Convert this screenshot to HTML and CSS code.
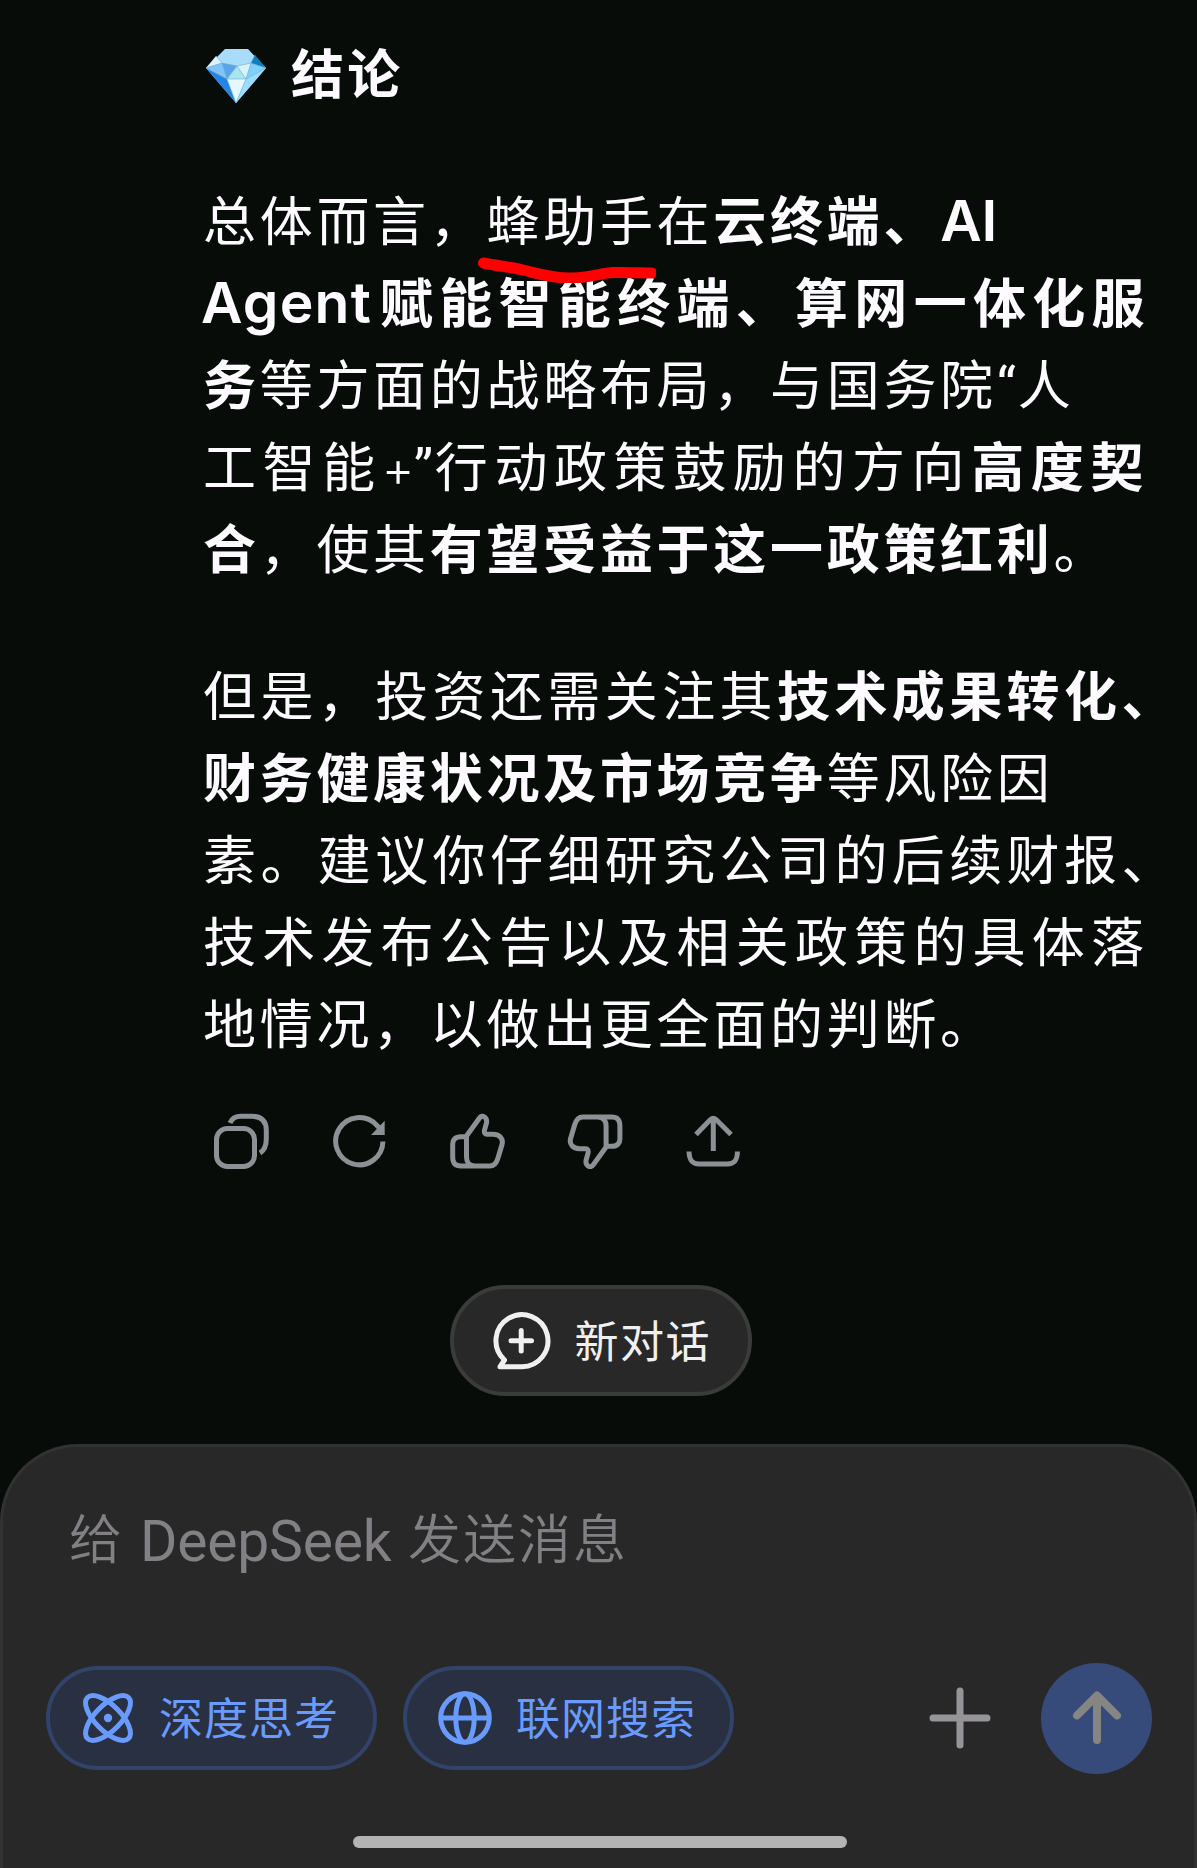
FILE: index.html
```html
<!DOCTYPE html>
<html lang="zh-CN">
<head>
  <meta charset="UTF-8">
  <meta name="viewport" content="width=device-width, initial-scale=1.0">
  <title>DeepSeek</title>
  <link rel="stylesheet" href="styles.css">
</head>
<body>
  <main class="answer">
    <h2 class="heading">
      <svg class="gem" viewBox="0 0 62 56">
        <path fill="#a9dcfb" d="M20 1h23l18 19-30 35L1 20z"/>
        <path fill="#d9f4ff" d="M11 8l6 7-16 5z"/>
        <path fill="#7fc4f5" d="M1 20l16-5 5 16z"/>
        <path fill="#5aa5ea" d="M17 15l15 3-10 13z"/>
        <path fill="#a6e6ee" d="M32 18l9 13H22z"/>
        <path fill="#d7f2fc" d="M32 18l14-3-5 16z"/>
        <path fill="#7fd0fa" d="M46 15l15 5-20 11z"/>
        <path fill="#0c7fc0" d="M50 7l11 13-15-5z"/>
        <path fill="#2386e3" d="M1 20l21 11 9 24z"/>
        <path fill="#e4f8ff" d="M22 31h19L31 55z"/>
        <path fill="#9bdcff" d="M61 20L41 31 31 55z"/>
        <path fill="none" stroke="#6fa7cd" stroke-width=".6" d="M11 8l6 7 15 3 14-3 4-8M1 20l16-5 5 16h19l5-16 15 5M22 31l10-13 9 13M1 20l21 11 9 24 10-24 20-11"/>
      </svg>
      <span>结论</span>
    </h2>

    <p class="text">
      <span class="line l1">总体而言，<span class="marked">蜂助手<svg class="stroke" viewBox="0 0 180 28"><path d="M7.500 8C22 11 34 12 47 15s28 8.500 49 8 29-5 41-5.500 30 .5 38.500.5"/></svg></span>在<b>云终端、<i>AI</i></b></span>
      <span class="line l2"><b><i>Agent</i>赋能智能终端、算网一体化服</b></span>
      <span class="line l3"><b>务</b>等方面的战略布局，与国务院<i class="quote">“</i>人</span>
      <span class="line l4">工智能<i class="plus-sign">+</i><i class="quote">”</i>行动政策鼓励的方向<b>高度契</b></span>
      <span class="line l5"><b>合</b>，使其<b>有望受益于这一政策红利</b>。</span>
    </p>
    <p class="text">
      <span class="line l6">但是，投资还需关注其<b>技术成果转化、</b></span>
      <span class="line l7"><b>财务健康状况及市场竞争</b>等风险因</span>
      <span class="line l8">素。建议你仔细研究公司的后续财报、</span>
      <span class="line l9">技术发布公告以及相关政策的具体落</span>
      <span class="line l10">地情况，以做出更全面的判断。</span>
    </p>

    <div class="actions">
      <svg viewBox="0 0 56 56"><rect x="3.500" y="15.500" width="38" height="38" rx="11"/><path d="M17 10c2-5 6-6.700 11-6.700h11c10 0 14.300 5.500 14.300 13.700v9c0 7-1.300 11-6.300 14"/></svg>
      <svg viewBox="0 0 56 56"><path d="M51.900 28.500A23.600 23.600 0 1 1 45.500 12l3 3"/><path class="solid" d="M53.700 7.700V22H40z"/></svg>
      <svg viewBox="0 0 56 56"><path id="thumb" d="M17.500 23L30.500 5c3-4 8-.5 7 5l-2 7c-.5 3 .5 4.300 2.500 4.300h6c7 0 10.500 4.700 9 10.200L49 45c-1.500 5-4 8-8 8H26c-6 0-8.500-4-8.500-9zM17.500 23.700H12c-6 0-8.300 3.300-8.300 7.300v13c0 6 2.300 9 8.300 9h14"/></svg>
      <svg viewBox="0 0 56 56"><use href="#thumb" transform="rotate(180 28.3 28.5)"/></svg>
      <svg viewBox="0 0 56 56"><path d="M28.300 38V5M11 21.500L25.500 6.500q2.800-2.500 5.600 0L46 21.500M4 38.500c.3 9 3 12.500 10 12.500h28.500c7 0 9.700-3.500 10-12.500"/></svg>
    </div>
  </main>

  <button class="new-chat">
    <svg viewBox="0 0 60 60"><path d="M30 55.700H9l4.500-6.700A26 26 0 1 1 30 55.700zM20 29.700h20.500M30.200 19.500V40"/></svg>
    <span>新对话</span>
  </button>

  <footer class="composer">
    <div class="placeholder">给<span class="brand">DeepSeek</span>发送消息</div>
    <div class="tools">
      <button class="chip">
        <svg viewBox="0 0 56 56"><ellipse cx="28" cy="28" rx="29" ry="12.800" transform="rotate(45 28 28)"/><ellipse cx="28" cy="28" rx="29" ry="12.800" transform="rotate(-45 28 28)"/><circle class="dot" cx="28" cy="28" r="4.200"/></svg>
        <span>深度思考</span>
      </button>
      <button class="chip">
        <svg viewBox="0 0 56 56"><circle cx="28" cy="28" r="24.300"/><ellipse cx="28" cy="28" rx="9.200" ry="24.300"/><path d="M4 28h48"/></svg>
        <span>联网搜索</span>
      </button>
      <svg class="plus" viewBox="0 0 62 62"><path d="M4 31h54M31 4v54"/></svg>
      <button class="send">
        <svg viewBox="0 0 56 56"><path d="M28 50V6M8 25.500L28 5.500l20 20"/></svg>
      </button>
    </div>
    <div class="home-bar"></div>
  </footer>
</body>
</html>
```

FILE: styles.css
```css
* {
  box-sizing: border-box;
}
body {
  margin: 0;
  width: 1197px;
  height: 1868px;
  display: flex;
  flex-direction: column;
  align-items: center;
  background-color: #070c09;
  color: #fdfbff;
  font-family: "Noto Sans CJK SC", sans-serif;
  overflow: hidden;
}
button {
  font-family: inherit;
  margin: 0;
  padding: 0;
}
.answer {
  width: 100%;
  height: 1285px;
  padding: 30px 0 0 203px;
}
.heading {
  display: flex;
  align-items: center;
  height: 82px;
  margin: 0 0 65px;
  font-size: 53px;
  font-weight: 700;
  letter-spacing: 3.3px;
}
.gem {
  width: 62px;
  height: 56px;
  margin: 9px 24px 0 2px;
}
.text {
  margin: 0 0 65px;
  font-size: 53px;
  line-height: 82px;
}
.line {
  display: block;
  height: 82px;
  white-space: nowrap;
  letter-spacing: 3.7px;
}
.line i {
  font-family: Inter, sans-serif;
  font-style: normal;
  font-size: 57px;
  line-height: 1;
  letter-spacing: 0;
}
.line b {
  font-weight: 700;
}
.line b i {
  font-weight: 600;
}
.line .quote {
  display: inline-block;
  width: 21px;
  font-family: Roboto, sans-serif;
  font-size: 54px;
}
.line .plus-sign {
  display: inline-block;
  width: 32px;
  font-size: 50px;
  font-weight: 300;
}
.l2 {
  letter-spacing: 6.3px;
}
.l2 i {
  margin: 0 8px 0 -2px;
  letter-spacing: 1.2px;
}
.l4 {
  letter-spacing: 6.6px;
}
.l6,
.l8 {
  letter-spacing: 4.4px;
}
.l9 {
  letter-spacing: 6.2px;
}
.marked {
  position: relative;
}
.stroke {
  position: absolute;
  left: -11px;
  top: 75px;
  width: 180px;
  height: 28px;
  fill: none;
  stroke: #f00;
  stroke-width: 11;
  stroke-linecap: round;
}
.actions {
  display: flex;
  gap: 62px;
  margin: -14px 0 0 10px;
}
.actions svg {
  width: 56px;
  height: 56px;
  fill: none;
  stroke: #8b9194;
  stroke-width: 5;
}
.actions .solid {
  fill: #8b9194;
  stroke: none;
}
.new-chat {
  display: flex;
  align-items: center;
  width: 302px;
  height: 111px;
  margin-left: 4px;
  padding-left: 37px;
  border: 4px solid #393c39;
  border-radius: 56px;
  background-color: #282828;
  color: #f0f0f0;
  font-size: 44px;
  letter-spacing: 1.5px;
}
.new-chat svg {
  width: 60px;
  height: 60px;
  margin-right: 24px;
  fill: none;
  stroke: #f0f0f0;
  stroke-width: 5;
  stroke-linecap: round;
  stroke-linejoin: round;
}
.new-chat span,
.chip span {
  margin-top: -4px;
}
.composer {
  display: flex;
  flex-direction: column;
  width: 100%;
  height: 424px;
  margin-top: 48px;
  border: 3px solid #323232;
  border-bottom: 0;
  border-radius: 78px 78px 0 0;
  background-color: #282828;
}
.placeholder {
  display: flex;
  align-items: center;
  height: 80px;
  margin: 49px 0 0 66px;
  color: #828084;
  font-size: 53px;
  font-weight: 350;
  letter-spacing: 2px;
  white-space: nowrap;
}
.brand {
  width: 268px;
  margin: 10px 0 0 16px;
  font-family: Roboto, sans-serif;
  font-size: 57px;
  font-weight: 400;
  letter-spacing: -0.2px;
}
.tools {
  display: flex;
  align-items: center;
  height: 112px;
  margin: 86px 42px 0 43px;
}
.chip {
  display: flex;
  align-items: center;
  width: 331px;
  height: 104px;
  margin-right: 26px;
  padding-left: 30px;
  border: 4px solid #324369;
  border-radius: 52px;
  background-color: #283042;
  color: #699bff;
  font-size: 44px;
  letter-spacing: 1px;
}
.chip svg {
  width: 56px;
  height: 56px;
  margin-right: 23px;
  fill: none;
  stroke: #699bff;
  stroke-width: 5;
}
.chip .dot {
  fill: #699bff;
  stroke: none;
}
.plus {
  width: 62px;
  height: 62px;
  margin-left: auto;
  stroke: #969498;
  stroke-width: 7;
  stroke-linecap: round;
}
.send {
  display: flex;
  align-items: center;
  justify-content: center;
  width: 111px;
  height: 111px;
  margin-left: 50px;
  border: none;
  border-radius: 50%;
  background-color: #364b79;
}
.send svg {
  width: 56px;
  height: 56px;
  fill: none;
  stroke: #858583;
  stroke-width: 8;
  stroke-linecap: round;
  stroke-linejoin: round;
}
.home-bar {
  width: 494px;
  height: 12px;
  margin: 62px 0 0 350px;
  border-radius: 6px;
  background-color: #b3b3b3;
}
```
